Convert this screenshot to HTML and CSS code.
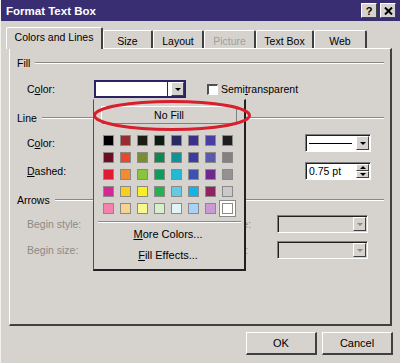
FILE: index.html
```html
<!DOCTYPE html>
<html lang="en">
<head>
  <meta charset="UTF-8">
  <title>Format Text Box</title>
  <link rel="stylesheet" href="styles.css">
</head>
<body>
  <div class="window">
    <!-- Title bar -->
    <div class="titlebar">
      <span class="title">Format Text Box</span>
      <div class="title-buttons">
        <span class="tbtn help">?</span>
        <span class="tbtn close">
          <svg width="9" height="8" viewBox="0 0 9 8"><path d="M1 0.5 L8 7.5 M8 0.5 L1 7.5" stroke="#000" stroke-width="2"/></svg>
        </span>
      </div>
    </div>

    <!-- Tabs -->
    <div class="tabs">
      <div class="tab active">Colors and Lines</div>
      <div class="tab w-size">Size</div>
      <div class="tab w-layout">Layout</div>
      <div class="tab w-picture disabled">Picture</div>
      <div class="tab w-textbox">Text Box</div>
      <div class="tab w-web">Web</div>
    </div>

    <div class="panel">
      <div class="group-head">Fill</div>
      <div class="row row-fill">
        <span class="label">C<u>o</u>lor:</span>
        <div class="combo combo-fill focused"><span class="field"></span><span class="drop"><i class="arrow"></i></span></div>
        <span class="check"><span class="box"></span>Semi<u>t</u>ransparent</span>
      </div>

      <div class="group-head">Line</div>
      <div class="row row-line">
        <span class="label">C<u>o</u>lor:</span>
        <div class="combo combo-right"><span class="field"><span class="sample"></span></span><span class="drop"><i class="arrow"></i></span></div>
      </div>
      <div class="row row-dash">
        <span class="label"><u>D</u>ashed:</span>
        <div class="combo combo-right"><span class="field">0.75 pt</span><span class="spin"><span class="spin-btn"><i class="arrow up"></i></span><span class="spin-btn"><i class="arrow"></i></span></span></div>
      </div>

      <div class="group-head">Arrows</div>
      <div class="row row-arrow disabled-row">
        <span class="label">Begin style:</span>
        <span class="end-label">End style:</span>
        <div class="combo combo-gray"><span class="field"></span><span class="drop"><i class="arrow"></i></span></div>
      </div>
      <div class="row row-arrow2 disabled-row">
        <span class="label">Begin size:</span>
        <span class="end-label">End size:</span>
        <div class="combo combo-gray"><span class="field"></span><span class="drop"><i class="arrow"></i></span></div>
      </div>
    </div>

    <div class="footer">
      <div class="button">OK</div>
      <div class="button">Cancel</div>
    </div>

    <!-- Colour dropdown -->
    <div class="popup">
      <div class="nofill">No Fill</div>
      <div class="palette">
        <span class="swatch" style="background:#000000"></span>
        <span class="swatch" style="background:#9a2b2e"></span>
        <span class="swatch" style="background:#1b1c12"></span>
        <span class="swatch" style="background:#0c1c10"></span>
        <span class="swatch" style="background:#2a2a62"></span>
        <span class="swatch" style="background:#3a2f8c"></span>
        <span class="swatch" style="background:#4a3ea2"></span>
        <span class="swatch" style="background:#1e1e1e"></span>

        <span class="swatch" style="background:#6a1022"></span>
        <span class="swatch" style="background:#e8482c"></span>
        <span class="swatch" style="background:#7a8c34"></span>
        <span class="swatch" style="background:#0a8a52"></span>
        <span class="swatch" style="background:#129292"></span>
        <span class="swatch" style="background:#3c3ca2"></span>
        <span class="swatch" style="background:#5c5aaa"></span>
        <span class="swatch" style="background:#828282"></span>

        <span class="swatch" style="background:#e01a32"></span>
        <span class="swatch" style="background:#f08c32"></span>
        <span class="swatch" style="background:#8ac242"></span>
        <span class="swatch" style="background:#109a5c"></span>
        <span class="swatch" style="background:#22bad2"></span>
        <span class="swatch" style="background:#3c52b2"></span>
        <span class="swatch" style="background:#6c2a8c"></span>
        <span class="swatch" style="background:#929292"></span>

        <span class="swatch" style="background:#d22a92"></span>
        <span class="swatch" style="background:#f8ce22"></span>
        <span class="swatch" style="background:#f8f022"></span>
        <span class="swatch" style="background:#22b252"></span>
        <span class="swatch" style="background:#62cae2"></span>
        <span class="swatch" style="background:#12b2ea"></span>
        <span class="swatch" style="background:#922262"></span>
        <span class="swatch" style="background:#cacaca"></span>

        <span class="swatch" style="background:#f282aa"></span>
        <span class="swatch" style="background:#f8d292"></span>
        <span class="swatch" style="background:#f8f892"></span>
        <span class="swatch" style="background:#d4f0cc"></span>
        <span class="swatch" style="background:#e2f4f8"></span>
        <span class="swatch" style="background:#aad2f8"></span>
        <span class="swatch" style="background:#ca9ad2"></span>
        <span class="swatch selected" style="background:#ffffff"></span>
      </div>
      <div class="separator"></div>
      <div class="menu-item"><u>M</u>ore Colors...</div>
      <div class="menu-item"><u>F</u>ill Effects...</div>
    </div>

    <!-- Red highlight ring -->
    <svg class="ring" width="164" height="34" viewBox="0 0 164 34">
      <ellipse cx="80" cy="16.5" rx="77.5" ry="14" fill="none" stroke="#d81f2c" stroke-width="3"/>
    </svg>
  </div>
</body>
</html>
```

FILE: styles.css
```css
body {
  margin: 0;
  padding: 0;
  font-family: "Liberation Sans", Arial, sans-serif;
  font-size: 10.5px;
  color: #000000;
  background-color: #d4d0c8;
}
u {
  text-decoration: underline;
}
.window {
  position: relative;
  width: 400px;
  height: 363px;
  background-color: #d6d3ce;
  overflow: hidden;
  box-sizing: border-box;
  border-left: 1px solid #f2f0ec;
}
.titlebar {
  height: 21px;
  background-color: #3a2e72;
  display: flex;
  align-items: center;
  justify-content: space-between;
  padding: 0 4px 0 5px;
}
.title {
  color: #ffffff;
  font-weight: bold;
  font-size: 11.5px;
}
.title-buttons {
  display: flex;
  gap: 3px;
}
.tbtn {
  width: 14px;
  height: 13px;
  background-color: #d6d3ce;
  border-top: 1px solid #ffffff;
  border-left: 1px solid #ffffff;
  border-right: 1px solid #404040;
  border-bottom: 1px solid #404040;
  display: flex;
  align-items: center;
  justify-content: center;
  font-weight: bold;
  font-size: 11px;
}

/* Tabs */
.tabs {
  display: flex;
  align-items: flex-end;
  height: 21px;
  margin-top: 6px;
  padding-left: 5px;
}
.tab {
  height: 18px;
  box-sizing: border-box;
  border-top: 1px solid #ffffff;
  border-left: 1px solid #ffffff;
  border-right: 2px solid #404040;
  border-radius: 2px 2px 0 0;
  display: flex;
  align-items: center;
  justify-content: center;
  padding-top: 2px;
  font-size: 10.5px;
}
.tab.active {
  width: 97px;
  height: 22px;
  margin-bottom: -1px;
  background-color: #d6d3ce;
  position: relative;
  z-index: 1;
  padding-top: 0;
  padding-bottom: 3px;
}
.w-size { width: 50px; }
.w-layout { width: 51px; }
.w-picture { width: 52px; }
.w-textbox { width: 58px; }
.w-web { width: 53px; }
.tab.disabled {
  color: #a19f9a;
}

/* Panel */
.panel {
  margin: 0 8px;
  height: 278px;
  box-sizing: border-box;
  border-top: 1px solid #ffffff;
  border-left: 1px solid #ffffff;
  border-right: 2px solid #404040;
  border-bottom: 2px solid #404040;
  padding: 7px 6px 0 7px;
}
.group-head {
  display: flex;
  align-items: center;
  height: 14px;
  margin-top: 13px;
}
.group-head:first-child {
  margin-top: 0;
}
.group-head::after {
  content: "";
  flex: 1;
  height: 0;
  border-top: 1px solid #8a8884;
  border-bottom: 1px solid #ffffff;
  margin-left: 5px;
}
.row {
  display: flex;
  align-items: center;
  height: 18px;
  padding-left: 10px;
  margin-top: 9px;
}
.row-fill { margin-top: 10px; }
.row-dash { margin-top: 10px; }
.row-arrow { margin-top: 8px; }
.row-arrow2 { margin-top: 8px; }
.label {
  width: 67px;
}
.disabled-row .label,
.disabled-row .end-label {
  color: #8c8a86;
}
.end-label {
  margin-left: auto;
  width: 72px;
}

/* Combo boxes */
.combo {
  display: flex;
  height: 18px;
  box-sizing: border-box;
  border-top: 1px solid #808080;
  border-left: 1px solid #808080;
  border-right: 1px solid #ffffff;
  border-bottom: 1px solid #ffffff;
  box-shadow: inset 1px 1px 0 #202020;
  background-color: #ffffff;
  padding: 1px 1px 1px 1px;
}
.combo .field {
  flex: 1;
  display: flex;
  align-items: center;
  padding-left: 2px;
}
.combo-fill {
  width: 92px;
}
.combo.focused {
  border: 2px solid #2c2462;
  box-shadow: none;
  padding: 0;
}
.combo.focused .field {
  margin-right: 3px;
  border-right: 1px solid #2c2462;
}
.drop,
.spin {
  width: 13px;
  display: flex;
  flex-direction: column;
  align-items: stretch;
  justify-content: center;
  background-color: #d6d3ce;
  box-sizing: border-box;
  border-top: 1px solid #ffffff;
  border-left: 1px solid #ffffff;
  border-right: 1px solid #404040;
  border-bottom: 1px solid #404040;
}
.drop {
  align-items: center;
}
.spin {
  border: none;
  background: none;
}
.spin-btn {
  flex: 1;
  display: flex;
  align-items: center;
  justify-content: center;
  background-color: #d6d3ce;
  border-top: 1px solid #ffffff;
  border-left: 1px solid #ffffff;
  border-right: 1px solid #404040;
  border-bottom: 1px solid #404040;
}
.arrow {
  width: 0;
  height: 0;
  border-left: 3px solid transparent;
  border-right: 3px solid transparent;
  border-top: 3px solid #000000;
}
.arrow.up {
  border-top: none;
  border-bottom: 3px solid #000000;
}
.combo-right {
  margin-left: auto;
  margin-right: 13px;
  width: 66px;
}
.sample {
  flex: 1;
  height: 1px;
  background-color: #000000;
  margin-right: 4px;
}
.combo-gray {
  width: 91px;
  margin-right: 16px;
  background-color: #d6d3ce;
}
.combo-gray .arrow {
  border-top-color: #8c8a86;
}

/* Checkbox */
.check {
  display: flex;
  align-items: center;
  margin-left: 21px;
}
.check .box {
  width: 11px;
  height: 11px;
  box-sizing: border-box;
  background-color: #ffffff;
  border-top: 2px solid #505050;
  border-left: 2px solid #505050;
  border-right: 1px solid #ffffff;
  border-bottom: 1px solid #ffffff;
  margin-right: 3px;
}

/* Footer buttons */
.footer {
  display: flex;
  justify-content: flex-end;
  gap: 5px;
  padding: 6px 7px 0 0;
}
.button {
  width: 71px;
  height: 23px;
  box-sizing: border-box;
  border-top: 1px solid #ffffff;
  border-left: 1px solid #ffffff;
  border-right: 2px solid #404040;
  border-bottom: 2px solid #404040;
  display: flex;
  align-items: center;
  justify-content: center;
  font-size: 11px;
}

/* Colour popup */
.popup {
  position: absolute;
  left: 92px;
  top: 99px;
  width: 153px;
  height: 172px;
  box-sizing: border-box;
  background-color: #d6d3ce;
  border-top: 1px solid #d6d3ce;
  border-left: 1px solid #505050;
  border-right: 2px solid #202020;
  border-bottom: 2px solid #202020;
  padding: 6px 0 0 6px;
  z-index: 2;
}
.nofill {
  width: 136px;
  height: 18px;
  margin-left: 1px;
  box-sizing: border-box;
  border-top: 1px solid #ffffff;
  border-left: 1px solid #ffffff;
  border-right: 1px solid #808080;
  border-bottom: 1px solid #808080;
  display: flex;
  align-items: center;
  justify-content: center;
}
.palette {
  display: grid;
  grid-template-columns: repeat(8, 17px);
  grid-auto-rows: 17px;
  margin-top: 8px;
}
.swatch {
  width: 11px;
  height: 11px;
  box-sizing: border-box;
  margin: 3px;
  border: 1px solid #8c8a86;
}
.swatch.selected {
  box-shadow: 0 0 0 2px #ffffff, 0 0 0 3px #8c8a86;
}
.separator {
  margin: 4px 3px 0 -2px;
  border-top: 1px solid #8c8a86;
  border-bottom: 1px solid #ffffff;
}
.menu-item {
  height: 21px;
  display: flex;
  align-items: center;
  justify-content: center;
  padding-right: 8px;
  font-size: 11px;
}
.menu-item:first-of-type {
  margin-top: 3px;
}
.ring {
  position: absolute;
  left: 91px;
  top: 99px;
  z-index: 3;
}
```
